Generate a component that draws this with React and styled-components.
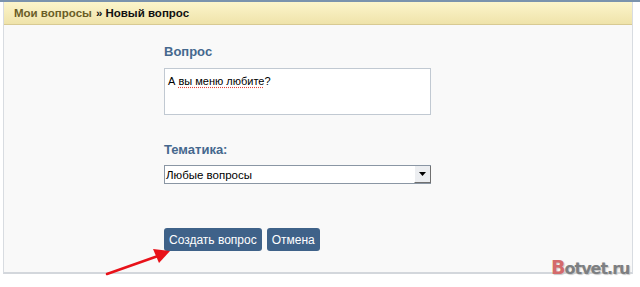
import React from 'react';
import styled, { createGlobalStyle } from 'styled-components';

const Global = createGlobalStyle`
  html, body {
    margin: 0;
    padding: 0;
    background: #ffffff;
  }
  body {
    font-family: 'Liberation Sans', Arial, sans-serif;
    overflow: hidden;
  }
`;

const Page = styled.div`
  position: relative;
  width: 640px;
  height: 287px;
  border-top: 2px solid #7b93ad;
  box-sizing: border-box;
`;

const Panel = styled.div`
  margin: 0 7px 0 3px;
  height: 272px;
  box-sizing: border-box;
  background: #f9f9f9;
  border-left: 1px solid #d8dce1;
  border-right: 1px solid #d8dce1;
  border-bottom: 2px solid #d3d7dc;
  display: flex;
  flex-direction: column;
`;

const Header = styled.div`
  height: 22px;
  display: flex;
  align-items: center;
  padding-left: 10px;
  background: linear-gradient(#fcf5cb, #efe3aa);
  border-bottom: 1px solid #d8ca93;
  font-size: 11.5px;
  font-weight: bold;
  color: #111;
`;

const Crumb = styled.span`
  color: #6a5d27;
  margin-right: 4px;
`;

const Form = styled.div`
  padding: 19px 0 0 160px;
  display: flex;
  flex-direction: column;
`;

const Label = styled.div`
  font-size: 13px;
  font-weight: bold;
  color: #45688e;
  margin-bottom: ${({ gap }) => gap}px;
`;

const TextBox = styled.div`
  width: 267px;
  height: 47px;
  background: #fff;
  border: 1px solid #c1c9d2;
  padding: 6px 3px;
  box-sizing: border-box;
  font-size: 11px;
  color: #000;
  margin-bottom: 27px;
`;

const Spell = styled.span`
  text-decoration: underline dotted #e0453a;
  text-underline-offset: 2px;
`;

const Select = styled.div`
  width: 267px;
  height: 19px;
  box-sizing: border-box;
  background: #fff;
  border: 1px solid #8a96a4;
  border-right: none;
  display: flex;
  align-items: stretch;
  font-size: 11.5px;
  margin-bottom: 44px;
`;

const SelectText = styled.div`
  flex: 1;
  display: flex;
  align-items: center;
  padding-left: 1px;
`;

const Drop = styled.div`
  width: 17px;
  background: #eceef1;
  border-left: 1px solid #fff;
  border-right: 1px solid #707070;
  border-bottom: 1px solid #707070;
  box-sizing: border-box;
  display: flex;
  align-items: center;
  justify-content: center;
`;

const Buttons = styled.div`
  display: flex;
  gap: 5px;
`;

const Button = styled.div`
  height: 23px;
  padding: 0 ${({ pad }) => pad}px;
  display: flex;
  align-items: center;
  background: #3f6289;
  border-radius: 3px;
  color: #fff;
  font-size: 12px;
`;

const Watermark = styled.div`
  position: absolute;
  left: 551px;
  top: 254px;
  font-family: 'DejaVu Sans', sans-serif;
  font-size: 16px;
  font-weight: bold;
  color: #7d7f82;
  text-shadow: 1px 1px 1px #c8c8c8;
  letter-spacing: -1px;
`;

const Red = styled.span`
  color: #d46a6c;
  font-size: 19px;
`;

const Arrow = styled.svg`
  position: absolute;
  left: 100px;
  top: 240px;
`;

export default function App() {
  return (
    <Page>
      <Global />
      <Panel>
        <Header>
          <Crumb>Мои вопросы</Crumb> » Новый вопрос
        </Header>
        <Form>
          <Label gap={9}>Вопрос</Label>
          <TextBox>
            А <Spell>вы меню любите</Spell>?
          </TextBox>
          <Label gap={8}>Тематика:</Label>
          <Select>
            <SelectText>Любые вопросы</SelectText>
            <Drop>
              <svg width="7" height="4" viewBox="0 0 7 4">
                <path d="M0 0h7L3.5 4z" fill="#000" />
              </svg>
            </Drop>
          </Select>
          <Buttons>
            <Button pad={5}>Создать вопрос</Button>
            <Button pad={5}>Отмена</Button>
          </Buttons>
        </Form>
      </Panel>
      <Arrow width="80" height="40" viewBox="0 0 80 40">
        <line x1="7" y1="32" x2="58" y2="14" stroke="#e8121a" strokeWidth="2.5" strokeLinecap="round" />
        <path d="M70 9 L53 7 L59 21 Z" fill="#e8121a" />
      </Arrow>
      <Watermark>
        <Red>B</Red>otvet.ru
      </Watermark>
    </Page>
  );
}
